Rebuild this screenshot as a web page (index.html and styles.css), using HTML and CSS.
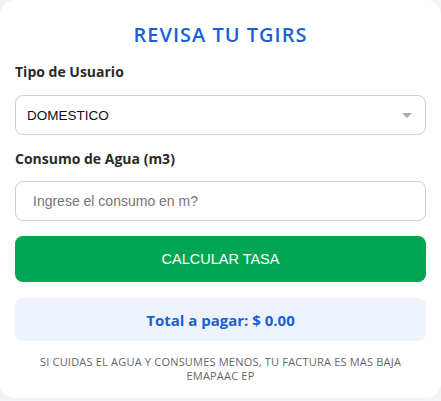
FILE: index.html
```html
<!DOCTYPE html>
<html>
<head>
    <meta name="viewport" charset="utf-8" content="width=device-width, initial-scale=1">
    <link rel="stylesheet" href="styles.css">
</head>
<body>
<div class="card">
	<h2 class="title">REVISA TU TGIRS</h2>

	<label class="label">Tipo de Usuario</label>
	<div class="select">
		<span>DOMESTICO</span>
		<span class="arrow"></span>
	</div>

	<label class="label">Consumo de Agua (m3)</label>
	<div class="input">Ingrese el consumo en m?</div>

	<button class="btn">CALCULAR TASA</button>

	<div class="result">Total a pagar: $ 0.00</div>

	<p class="note">SI CUIDAS EL AGUA Y CONSUMES MENOS, TU FACTURA ES MAS BAJA<br>EMAPAAC EP</p>
</div>
</body>
</html>
```

FILE: styles.css
```css
* { margin: 0; box-sizing: border-box }

body {
	background: #f2f3f5;
	font-family: "Open Sans", sans-serif;
	width: 441px;
	height: 401px;
	overflow: hidden;
}

.card {
	background: #fff;
	border-radius: 15px;
	height: 398px;
	padding: 22px 15px 0;
	display: flex;
	flex-direction: column;
}

.title {
	text-align: center;
	color: #1a5fd6;
	font-size: 20px;
	font-weight: 600;
	letter-spacing: 1px;
	line-height: 26px;
}

.label {
	font-weight: 700;
	font-size: 14px;
	color: #2b2b2b;
	line-height: 20px;
	margin-top: 14px;
}

.select, .input {
	height: 40px;
	border: 1px solid #cfcfcf;
	border-radius: 8px;
	display: flex;
	align-items: center;
	font-family: "Liberation Sans", Arial, sans-serif;
	font-size: 14px;
	padding: 0 11px;
	margin-top: 13px;
}

.select { justify-content: space-between; color: #111; font-size: 13.5px }

.arrow {
	width: 0;
	height: 0;
	border-left: 5px solid transparent;
	border-right: 5px solid transparent;
	border-top: 5px solid #aaa;
	margin-right: 2px;
}

.input { color: #757575; padding-left: 17px; margin-top: 12px }

.btn {
	height: 46px;
	margin-top: 15px;
	background: #00a651;
	border: none;
	border-radius: 8px;
	color: #fff;
	font-family: "Liberation Sans", Arial, sans-serif;
	font-size: 14.5px;
}

.result {
	margin-top: 16px;
	height: 43px;
	background: #eef2fd;
	border-radius: 8px;
	display: flex;
	align-items: center;
	justify-content: center;
	color: #1a5fd6;
	font-weight: 700;
	font-size: 15px;
}

.note {
	margin-top: 14px;
	text-align: center;
	color: #666;
	font-size: 11px;
	letter-spacing: 0.2px;
	line-height: 14px;
}
```
